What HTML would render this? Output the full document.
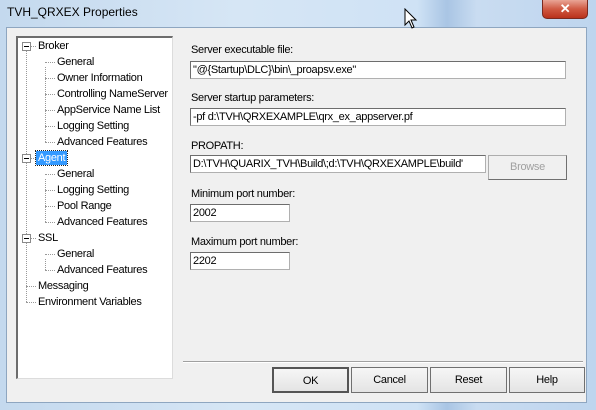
<!DOCTYPE html>
<html><head><style>
*{margin:0;padding:0;box-sizing:border-box}
body{width:596px;height:410px;overflow:hidden;font-family:"Liberation Sans",Arial,sans-serif;font-size:11px;letter-spacing:-0.3px;color:#000;
background:linear-gradient(90deg,#c4d9ee 0%,#d6e6f5 40%,#cfe2f5 70%,#a9c5e4 75%,#c9dcf1 80%,#bed5ee 100%);position:relative}
.a{position:absolute}
.title{left:7px;top:5px;font-size:12px;letter-spacing:0;color:#000}
.close{left:542px;top:0;width:46px;height:19px;border:1px solid #7a2a20;border-top:none;border-radius:0 0 5px 5px;background:linear-gradient(#e9a596,#d05a43 50%,#b9321c);color:#fff;font-weight:bold;text-align:center;font-size:13px;line-height:17px}
.client{left:6px;top:27px;width:581px;height:376px;background:#f0f0f0;border:1px solid #8ea6c0}
.tree{left:16px;top:36px;width:157px;height:343px;background:#fff;border:1px solid #a0a0a0;border-right-color:#dcdcdc;border-bottom-color:#dcdcdc;border-left:2px solid #6d6d6d;border-top:2px solid #6d6d6d}
.t{position:absolute;white-space:nowrap;line-height:14px}
.box{position:absolute;width:9px;height:9px;border:1px solid #8a8a8a;background:#fff}
.box:after{content:"";position:absolute;left:1px;top:3px;width:5px;height:1px;background:#000}
.vl{position:absolute;border-left:1px dotted #999;width:0}
.hl{position:absolute;border-top:1px dotted #999;height:0}
.lbl{position:absolute;left:191px;white-space:nowrap}
.inp{position:absolute;left:190px;height:18px;background:#fff;border:1px solid #b0b0b0;border-top-color:#6d6d6d;border-left-color:#6d6d6d;padding:1px 2px;white-space:nowrap;overflow:hidden;line-height:14px}
.btn{position:absolute;top:367px;height:26px;border:1px solid #707070;background:linear-gradient(#f6f6f6,#e4e4e4);text-align:center;line-height:24px}
</style></head><body>
<div class="a title">TVH_QRXEX Properties</div>
<div class="a close">✕</div>
<div class="a client"></div>
<div class="a tree"></div>
<div class="vl" style="left:26px;top:51px;height:251px"></div>
<div class="vl" style="left:45px;top:67px;height:75px"></div>
<div class="vl" style="left:45px;top:179px;height:43px"></div>
<div class="vl" style="left:45px;top:259px;height:11px"></div>
<div class="hl" style="left:31px;top:46px;width:5px"></div>
<div class="hl" style="left:31px;top:158px;width:5px"></div>
<div class="hl" style="left:31px;top:238px;width:5px"></div>
<div class="hl" style="left:26px;top:286px;width:10px"></div>
<div class="hl" style="left:26px;top:302px;width:10px"></div>
<div class="hl" style="left:45px;top:62px;width:10px"></div><div class="hl" style="left:45px;top:78px;width:10px"></div><div class="hl" style="left:45px;top:94px;width:10px"></div><div class="hl" style="left:45px;top:110px;width:10px"></div><div class="hl" style="left:45px;top:126px;width:10px"></div><div class="hl" style="left:45px;top:142px;width:10px"></div>
<div class="hl" style="left:45px;top:174px;width:10px"></div><div class="hl" style="left:45px;top:190px;width:10px"></div><div class="hl" style="left:45px;top:206px;width:10px"></div><div class="hl" style="left:45px;top:222px;width:10px"></div>
<div class="hl" style="left:45px;top:254px;width:10px"></div><div class="hl" style="left:45px;top:270px;width:10px"></div>
<div class="box" style="left:22px;top:42px"></div>
<div class="box" style="left:22px;top:154px"></div>
<div class="box" style="left:22px;top:234px"></div>
<div class="t" style="left:38px;top:39px">Broker</div>
<div class="t" style="left:57px;top:55px">General</div>
<div class="t" style="left:57px;top:71px">Owner Information</div>
<div class="t" style="left:57px;top:87px">Controlling NameServer</div>
<div class="t" style="left:57px;top:103px">AppService Name List</div>
<div class="t" style="left:57px;top:119px">Logging Setting</div>
<div class="t" style="left:57px;top:135px">Advanced Features</div>
<div class="t" style="left:36px;top:151px;background:#3399ff;color:#fff;padding:0 2px;outline:1px dotted #222">Agent</div>
<div class="t" style="left:57px;top:167px">General</div>
<div class="t" style="left:57px;top:183px">Logging Setting</div>
<div class="t" style="left:57px;top:199px">Pool Range</div>
<div class="t" style="left:57px;top:215px">Advanced Features</div>
<div class="t" style="left:38px;top:231px">SSL</div>
<div class="t" style="left:57px;top:247px">General</div>
<div class="t" style="left:57px;top:263px">Advanced Features</div>
<div class="t" style="left:38px;top:279px">Messaging</div>
<div class="t" style="left:38px;top:295px">Environment Variables</div>
<div class="lbl" style="top:44px">Server executable file:</div>
<div class="inp" style="top:61px;width:376px">"@{Startup\DLC}\bin\_proapsv.exe"</div>
<div class="lbl" style="top:92px">Server startup parameters:</div>
<div class="inp" style="top:108px;width:376px">-pf d:\TVH\QRXEXAMPLE\qrx_ex_appserver.pf</div>
<div class="lbl" style="top:140px">PROPATH:</div>
<div class="inp" style="top:155px;width:296px">D:\TVH\QUARIX_TVH\Build\;d:\TVH\QRXEXAMPLE\build'</div>
<div class="a" style="left:488px;top:155px;width:79px;height:25px;border:1px solid #adadad;border-right-color:#707070;border-bottom-color:#707070;background:#f0f0f0;color:#a0a0a0;text-align:center;line-height:23px">Browse</div>
<div class="lbl" style="top:188px">Minimum port number:</div>
<div class="inp" style="top:204px;width:100px">2002</div>
<div class="lbl" style="top:236px">Maximum port number:</div>
<div class="inp" style="top:252px;width:100px">2202</div>
<div class="a" style="left:183px;top:361px;width:400px;height:2px;border-top:1px solid #a0a0a0;border-bottom:1px solid #fff"></div>
<div class="btn" style="left:272px;width:77px;border:2px solid #555">OK</div>
<div class="btn" style="left:351px;width:77px">Cancel</div>
<div class="btn" style="left:430px;width:77px">Reset</div>
<div class="btn" style="left:509px;width:76px">Help</div>
<svg class="a" style="left:404px;top:8px" width="14" height="22" viewBox="0 0 14 22"><path d="M1 1 L1 17 L5 13 L8 20 L10 19 L7 12 L12 12 Z" fill="#fff" stroke="#000" stroke-width="1"/></svg>
</body></html>
